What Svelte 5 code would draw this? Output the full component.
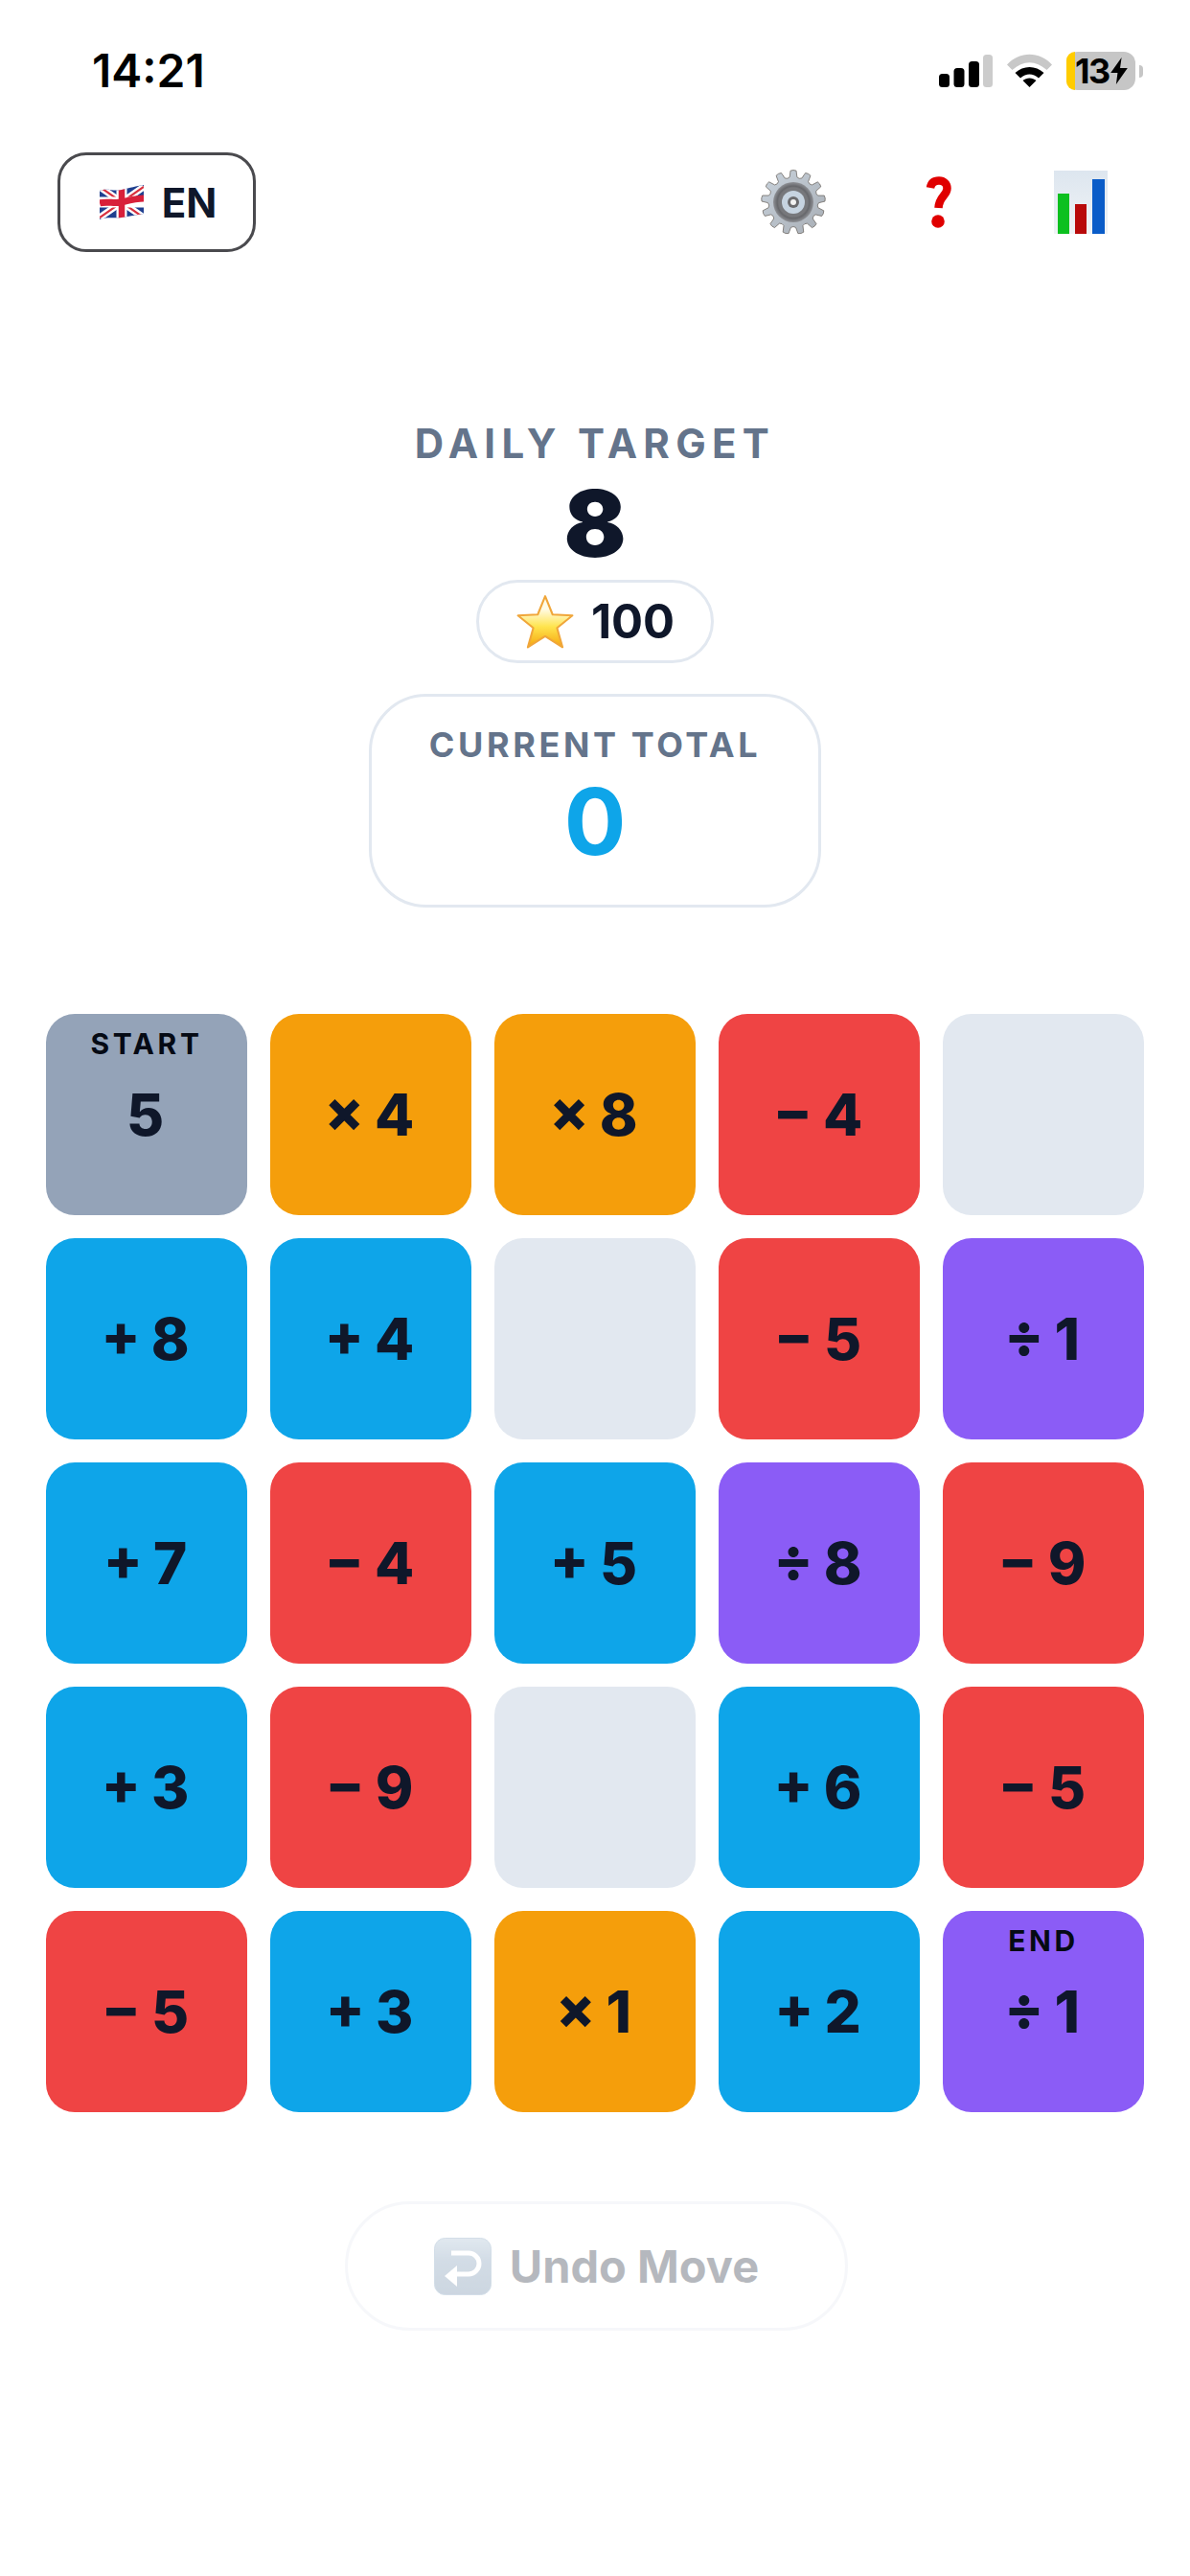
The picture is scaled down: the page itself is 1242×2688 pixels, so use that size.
<script>
  const rows = [
    [{ t: 'start', v: '5', l: 'START' }, { t: 'mul', v: '× 4' }, { t: 'mul', v: '× 8' }, { t: 'sub', v: '− 4' }, { t: 'empty', v: '' }],
    [{ t: 'add', v: '+ 8' }, { t: 'add', v: '+ 4' }, { t: 'empty', v: '' }, { t: 'sub', v: '− 5' }, { t: 'div', v: '÷ 1' }],
    [{ t: 'add', v: '+ 7' }, { t: 'sub', v: '− 4' }, { t: 'add', v: '+ 5' }, { t: 'div', v: '÷ 8' }, { t: 'sub', v: '− 9' }],
    [{ t: 'add', v: '+ 3' }, { t: 'sub', v: '− 9' }, { t: 'empty', v: '' }, { t: 'add', v: '+ 6' }, { t: 'sub', v: '− 5' }],
    [{ t: 'sub', v: '− 5' }, { t: 'add', v: '+ 3' }, { t: 'mul', v: '× 1' }, { t: 'add', v: '+ 2' }, { t: 'div', v: '÷ 1', l: 'END' }]
  ];
  const tiles = rows.flat();

  // gear outline: 13 rounded teeth round a 68 box
  const teeth = 13;
  let gearPath = '';
  for (let i = 0; i < teeth; i++) {
    const a = (i / teeth) * Math.PI * 2 - 0.12;
    const w = (Math.PI * 2) / teeth;
    const pts = [
      [25.5, a - w * 0.5],
      [26.5, a - w * 0.3],
      [33, a - w * 0.19],
      [33.500, a],
      [33, a + w * 0.19],
      [26.5, a + w * 0.3]
    ];
    for (const [r, t] of pts) {
      const x = (34 + r * Math.cos(t)).toFixed(2);
      const y = (34 + r * Math.sin(t)).toFixed(2);
      gearPath += (gearPath ? 'L' : 'M') + x + ' ' + y + ' ';
    }
  }
  gearPath += 'Z';
</script>

<div class="page">
  <div class="status">
    <span class="time">14:21</span>
    <div class="status-right">
      <svg class="signal" width="56" height="34" viewBox="0 0 56 34" aria-hidden="true">
        <rect x="0" y="20" width="11" height="14" rx="3.5" fill="#000" />
        <rect x="15.5" y="14" width="11" height="20" rx="3.5" fill="#000" />
        <rect x="31" y="7" width="11" height="27" rx="3.5" fill="#000" />
        <rect x="46" y="0" width="10" height="34" rx="3.5" fill="#ccc" />
      </svg>
      <svg class="wifi" width="47" height="35" viewBox="0 0 47 35" aria-hidden="true">
        <path d="M0 11.5C13-3 34-3 47 11.5L41.5 17C30 6.5 17 6.5 5.5 17Z" fill="#c8c8c8" />
        <path d="M8.5 20C17 12 30 12 38.5 20L33 25.5C27 20 20 20 14 25.5Z" fill="#000" />
        <path d="M16.5 28C20.5 24.5 26.5 24.5 30.5 28L23.5 35Z" fill="#000" />
      </svg>
      <div class="battery">
        <div class="batt-body">
          <span class="batt-fill"></span>
          <span class="batt-num">13</span>
          <svg class="bolt" width="18" height="28" viewBox="0 0 17 27" aria-hidden="true">
            <path d="M11 0 0 15.5H7L5.5 27 17 10.5H9.5Z" fill="#000" />
          </svg>
        </div>
        <span class="batt-cap"></span>
      </div>
    </div>
  </div>

  <div class="header">
    <button class="lang">
      <svg width="46" height="36" viewBox="0 0 46 36" aria-hidden="true">
        <defs>
          <clipPath id="flagClip">
            <path d="M0 6C8 3 14 7 23 5S38 1 46 0V30C38 31 31 33 23 34S8 33 0 36Z" />
          </clipPath>
        </defs>
        <g clip-path="url(#flagClip)">
          <rect width="46" height="36" fill="#1f3f8f" />
          <path d="M0 2 46 34M46 2 0 34" stroke="#fff" stroke-width="7" />
          <path d="M0 2 46 34M46 2 0 34" stroke="#d8303f" stroke-width="2.2" />
          <path d="M23 0V36M0 18H46" stroke="#fff" stroke-width="11" />
          <path d="M23 0V36" stroke="#d8203a" stroke-width="6.5" />
          <path d="M0 19C8 16.500 15 20 23 18S38 14 46 14" stroke="#d8203a" stroke-width="7" fill="none" />
        </g>
      </svg>
      <span>EN</span>
    </button>
    <div class="tools">
      <button class="tool" aria-label="Settings">
        <svg width="68" height="68" viewBox="0 0 68 68" aria-hidden="true">
          <defs>
            <linearGradient id="gearG" x1="0" y1="0" x2="1" y2="1">
              <stop offset="0" stop-color="#c9d3dd" />
              <stop offset="1" stop-color="#a8aeb5" />
            </linearGradient>
            <radialGradient id="ringG">
              <stop offset="0.55" stop-color="#9a9a9d" />
              <stop offset="0.8" stop-color="#66676b" />
              <stop offset="1" stop-color="#8f9196" />
            </radialGradient>
          </defs>
          <path d={gearPath} fill="url(#gearG)" stroke="#6f6a64" stroke-width="0.8" stroke-linejoin="round" />
          <circle cx="34" cy="34" r="21" fill="url(#ringG)" />
          <circle cx="34" cy="34" r="15" fill="#77787c" />
          <circle cx="34" cy="34" r="12" fill="#c6d3e0" />
          <circle cx="34" cy="34" r="6" fill="#6b6b6e" />
          <circle cx="34" cy="34" r="3" fill="#f2f2f2" />
        </svg>
      </button>
      <button class="tool help" aria-label="Help">
        <svg width="28" height="54" viewBox="0 0 28 54" aria-hidden="true">
          <path d="M5 12C6 6 10 4.500 14 4.500C19 4.500 22.500 8 22.500 12.500C22.500 20 14 21 13.500 33" fill="none" stroke="#e00000" stroke-width="8.500" stroke-linecap="butt" />
          <circle cx="13" cy="47" r="6.800" fill="#e00000" />
        </svg>
      </button>
      <button class="tool" aria-label="Stats">
        <svg width="56" height="66" viewBox="0 0 56 66" aria-hidden="true">
          <defs>
            <linearGradient id="chartBg" x1="0" y1="0" x2="0" y2="1">
              <stop offset="0" stop-color="#dde6ef" />
              <stop offset="1" stop-color="#f0f3f6" />
            </linearGradient>
          </defs>
          <rect width="56" height="66" fill="url(#chartBg)" />
          <rect x="4" y="24" width="12" height="42" fill="#0cc01f" />
          <rect x="22" y="35" width="12" height="31" fill="#b80a0a" />
          <rect x="40" y="9" width="13" height="57" fill="#0a5cc8" />
        </svg>
      </button>
    </div>
  </div>

  <div class="hero">
    <div class="target-label">DAILY TARGET</div>
    <div class="target">8</div>
    <div class="score">
      <svg width="62" height="58" viewBox="0 0 60 56" aria-hidden="true">
        <defs>
          <linearGradient id="starG" x1="0" y1="0" x2="0" y2="1">
            <stop offset="0.25" stop-color="#fffbe6" />
            <stop offset="0.6" stop-color="#ffe44d" />
            <stop offset="1" stop-color="#f5a50e" />
          </linearGradient>
        </defs>
        <path d="M30 2 37.500 20.500 57.500 21.500 42 34 47.500 53.500 30 42.500 12.500 53.500 18 34 2.500 21.500 22.500 20.500Z" fill="url(#starG)" stroke="#f0a63a" stroke-width="2" stroke-linejoin="round" />
      </svg>
      <span>100</span>
    </div>
    <div class="current">
      <div class="current-label">CURRENT TOTAL</div>
      <div class="current-value">0</div>
    </div>
  </div>

  <div class="grid">
    {#each tiles as tile}
      <div class="tile {tile.t}">
        {#if tile.l}<span class="tile-label">{tile.l}</span>{/if}
        <span class="tile-value">{tile.v}</span>
      </div>
    {/each}
  </div>

  <button class="undo">
    <svg width="60" height="60" viewBox="0 0 60 60" aria-hidden="true">
      <defs>
        <linearGradient id="undoG" x1="0" y1="0" x2="0" y2="1">
          <stop offset="0" stop-color="#9cb6cd" />
          <stop offset="0.4" stop-color="#6e8eae" />
          <stop offset="1" stop-color="#5a7a9c" />
        </linearGradient>
      </defs>
      <rect x="0.500" y="0.500" width="59" height="59" rx="11" fill="url(#undoG)" stroke="#6f93b5" />
      <path d="M18 16H36A11 11 0 0 1 36 38H22" fill="none" stroke="#fff" stroke-width="5" />
      <path d="M11 40 24 29V51Z" fill="#fff" />
    </svg>
    <span>Undo Move</span>
  </button>
</div>

<style>
  :global(body) {
    margin: 0;
    background: #fff;
  }
  .page {
    width: 1242px;
    height: 2688px;
    background: #fff;
    font-family: Inter, "Liberation Sans", sans-serif;
    color: #0f172a;
    overflow: hidden;
  }
  button {
    font-family: inherit;
    background: none;
    padding: 0;
    border: none;
    color: inherit;
  }
  .status {
    height: 110px;
    padding: 40px 49px 0 96px;
    box-sizing: border-box;
    display: flex;
    justify-content: space-between;
    align-items: flex-start;
  }
  .time {
    font-weight: 600;
    font-size: 48px;
    line-height: 68px;
    color: #000;
  }
  .status-right {
    display: flex;
    align-items: flex-start;
    padding-top: 14px;
  }
  .signal {
    margin-top: 3px;
  }
  .wifi {
    margin-left: 15px;
    margin-top: 2px;
  }
  .battery {
    margin-left: 15px;
    display: flex;
    align-items: center;
  }
  .batt-body {
    position: relative;
    width: 72px;
    height: 40px;
    border-radius: 12px;
    background: #c6c6c6;
    display: flex;
    align-items: center;
    padding-left: 9px;
    box-sizing: border-box;
  }
  .batt-fill {
    position: absolute;
    left: 0;
    top: 0;
    bottom: 0;
    width: 9px;
    background: #ffcc00;
    border-radius: 12px 0 0 12px;
  }
  .batt-num {
    position: relative;
    font-weight: 700;
    font-size: 36px;
    line-height: 40px;
    letter-spacing: -1.500px;
    color: #000;
  }
  .bolt {
    flex: none;
    margin-left: 1px;
  }
  .batt-cap {
    width: 4px;
    height: 13px;
    margin-left: 4px;
    background: #c6c6c6;
    border-radius: 0 4px 4px 0;
  }
  .header {
    margin-top: 49px;
    height: 104px;
    padding: 0 39px 0 60px;
    display: flex;
    justify-content: space-between;
    align-items: center;
  }
  .lang {
    width: 207px;
    height: 104px;
    box-sizing: border-box;
    border: 3px solid #4a4a4e;
    border-radius: 30px;
    padding-left: 3px;
    display: flex;
    align-items: center;
    justify-content: center;
    gap: 19px;
    font-weight: 700;
    font-size: 42px;
    color: #0f172a;
  }
  .tools {
    display: flex;
  }
  .tool {
    width: 150px;
    height: 104px;
    display: flex;
    align-items: center;
    justify-content: center;
  }
  .help {
    padding-left: 3px;
    box-sizing: border-box;
  }
  .hero {
    display: flex;
    flex-direction: column;
    align-items: center;
    margin-top: 176px;
  }
  .target-label {
    font-size: 42px;
    line-height: 48px;
    font-weight: 700;
    letter-spacing: 6.300px;
    color: #64748b;
  }
  .target {
    margin-top: 11px;
    font-size: 96px;
    line-height: 96px;
    font-weight: 900;
  }
  .score {
    margin-top: 11px;
    height: 87px;
    padding: 0 38px;
    box-sizing: border-box;
    display: flex;
    align-items: center;
    gap: 17px;
    border: 3px solid #e2e8f0;
    border-radius: 44px;
    font-size: 49px;
    font-weight: 700;
  }
  .current {
    margin-top: 32px;
    width: 472px;
    height: 223px;
    box-sizing: border-box;
    border: 3px solid #e2e8f0;
    border-radius: 60px;
    padding-top: 29px;
    text-align: center;
  }
  .current-label {
    font-size: 36px;
    line-height: 42px;
    font-weight: 700;
    letter-spacing: 3.600px;
    color: #64748b;
  }
  .current-value {
    margin-top: 11px;
    font-size: 96px;
    line-height: 96px;
    font-weight: 700;
    color: #0ea5e9;
  }
  .grid {
    margin: 111px 48px 0;
    display: grid;
    grid-template-columns: repeat(5, 210px);
    grid-auto-rows: 210px;
    gap: 24px;
  }
  .tile {
    position: relative;
    border-radius: 30px;
    display: flex;
    align-items: center;
    justify-content: center;
    font-size: 60px;
    font-weight: 800;
    word-spacing: -2px;
    color: #0f172a;
  }
  .tile-value {
    margin-right: 3px;
  }
  .tile-label {
    position: absolute;
    top: 14px;
    left: 0;
    right: 0;
    text-align: center;
    font-size: 30px;
    line-height: 34px;
    letter-spacing: 3.600px;
    font-weight: 700;
    color: #050a14;
  }
  .start { background: #94a3b8; }
  .mul { background: #f59e0b; }
  .sub { background: #ef4444; }
  .add { background: #0ea5e9; }
  .div { background: #8b5cf6; }
  .empty { background: #e2e8f0; }
  .undo {
    margin: 93px 0 0 360px;
    width: 525px;
    height: 135px;
    box-sizing: border-box;
    border: 3px solid #e2e8f0;
    border-radius: 68px;
    display: flex;
    align-items: center;
    justify-content: center;
    gap: 19px;
    font-size: 47px;
    font-weight: 700;
    opacity: 0.3;
  }
</style>
